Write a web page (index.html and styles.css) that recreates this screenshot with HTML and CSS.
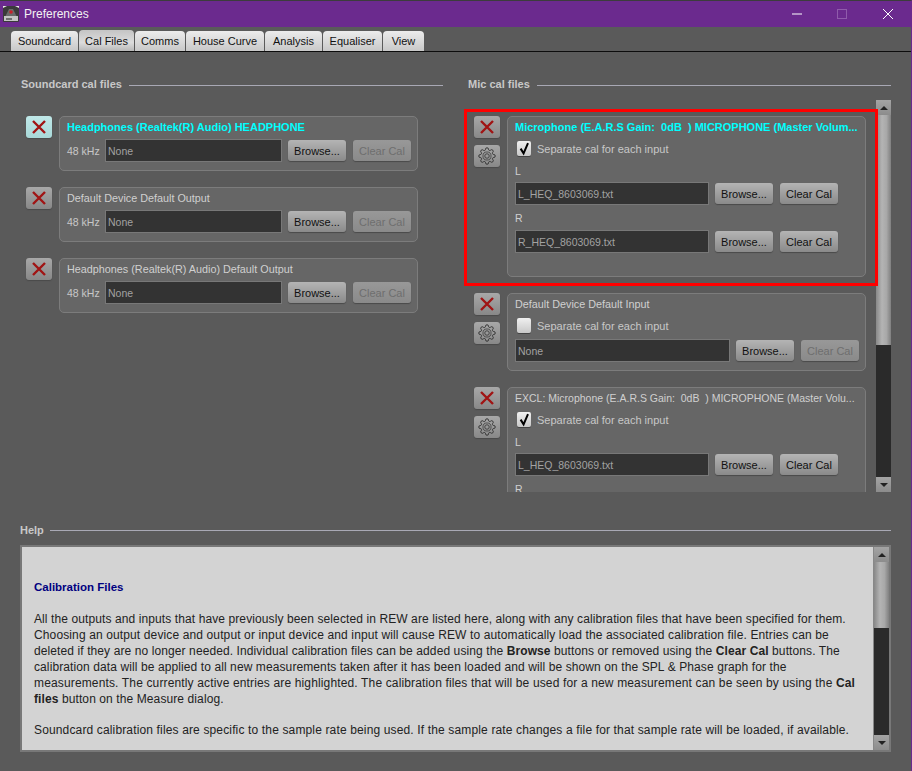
FILE: index.html
```html
<!DOCTYPE html>
<html lang="en">
<head>
<meta charset="utf-8">
<title>Preferences</title>
<link rel="stylesheet" href="styles.css">
</head>
<body>
<svg class="defs" width="0" height="0" aria-hidden="true">
  <symbol id="x" viewBox="0 0 16 16"><path d="M2 2L14 14M14 2L2 14" fill="none" stroke="#a01414" stroke-width="2.4"/></symbol>
  <symbol id="gear" viewBox="0 0 24 24">
    <path fill="none" stroke="#2e2e2e" stroke-width="1.2" d="M19.4 15a1.65 1.65 0 0 0 .33 1.82l.06.06a2 2 0 0 1 0 2.83 2 2 0 0 1-2.83 0l-.06-.06a1.65 1.65 0 0 0-1.82-.33 1.65 1.65 0 0 0-1 1.51V21a2 2 0 0 1-2 2 2 2 0 0 1-2-2v-.09A1.65 1.65 0 0 0 9 19.4a1.65 1.65 0 0 0-1.82.33l-.06.06a2 2 0 0 1-2.83 0 2 2 0 0 1 0-2.83l.06-.06a1.65 1.65 0 0 0 .33-1.82 1.65 1.65 0 0 0-1.51-1H3a2 2 0 0 1-2-2 2 2 0 0 1 2-2h.09A1.65 1.65 0 0 0 4.6 9a1.65 1.65 0 0 0-.33-1.82l-.06-.06a2 2 0 0 1 0-2.83 2 2 0 0 1 2.83 0l.06.06a1.65 1.65 0 0 0 1.82.33H9a1.65 1.65 0 0 0 1-1.51V3a2 2 0 0 1 2-2 2 2 0 0 1 2 2v.09a1.65 1.65 0 0 0 1 1.51 1.65 1.65 0 0 0 1.82-.33l.06-.06a2 2 0 0 1 2.83 0 2 2 0 0 1 0 2.83l-.06.06a1.65 1.65 0 0 0-.33 1.82V9a1.65 1.65 0 0 0 1.51 1H21a2 2 0 0 1 2 2 2 2 0 0 1-2 2h-.09a1.65 1.65 0 0 0-1.51 1z"/>
    <circle cx="12" cy="12" r="5.4" fill="none" stroke="#3a3a3a" stroke-width="1"/>
    <circle cx="12" cy="12" r="3" fill="none" stroke="#3a3a3a" stroke-width="1.2"/>
  </symbol>
  <symbol id="check" viewBox="0 0 15 15"><path d="M3.6 7.6L6.6 12.4L11 2.2" fill="none" stroke="#000" stroke-width="2"/></symbol>
</svg>
<div class="window">
  <header class="titlebar">
    <svg class="appicon" viewBox="0 0 16 16" width="16" height="16">
      <rect width="16" height="16" rx="1" fill="#3a3a3a"/>
      <path d="M0 2L4 0L0 0ZM16 2L12 0L16 0Z" fill="#e8e8e8"/>
      <path d="M2 11L6 3L10 3L14 11Z" fill="#6a6a6a"/>
      <rect x="1" y="10" width="14" height="5" fill="#c4c4c4"/>
      <rect x="3" y="12" width="6" height="2" fill="#707070"/>
      <circle cx="8" cy="6" r="1.8" fill="#c8202a"/>
    </svg>
    <span class="title">Preferences</span>
    <div class="winctl">
      <svg class="ctl ctl-min" viewBox="0 0 10 10" width="10" height="10"><path d="M0 5H10" stroke="#fff" stroke-width="1"/></svg>
      <svg class="ctl ctl-max" viewBox="0 0 10 10" width="10" height="10"><rect x=".5" y=".5" width="9" height="9" fill="none" stroke="#8f5bab"/></svg>
      <svg class="ctl ctl-close" viewBox="0 0 10 10" width="10" height="10"><path d="M0 0L10 10M10 0L0 10" stroke="#fff" stroke-width="1"/></svg>
    </div>
  </header>

  <nav class="tabs">
    <span class="tab tab-1">Soundcard</span>
    <span class="tab tab-2 tab-active">Cal Files</span>
    <span class="tab tab-3">Comms</span>
    <span class="tab tab-4">House Curve</span>
    <span class="tab tab-5">Analysis</span>
    <span class="tab tab-6">Equaliser</span>
    <span class="tab tab-7">View</span>
  </nav>

  <main class="columns">
    <section class="col">
      <h2 class="sect"><span>Soundcard cal files</span></h2>
      <div class="cardlist">
        <div class="item">
          <div class="side"><button class="ibtn ibtn-active"><svg width="16" height="16"><use href="#x"/></svg></button></div>
          <div class="card">
            <div class="ctitle active">Headphones (Realtek(R) Audio) HEADPHONE</div>
            <div class="frow sc">
              <span class="rate">48 kHz</span>
              <div class="field w-sc">None</div>
              <button class="btn">Browse...</button>
              <button class="btn off">Clear Cal</button>
            </div>
          </div>
        </div>
        <div class="item">
          <div class="side"><button class="ibtn"><svg width="16" height="16"><use href="#x"/></svg></button></div>
          <div class="card">
            <div class="ctitle">Default Device Default Output</div>
            <div class="frow sc">
              <span class="rate">48 kHz</span>
              <div class="field w-sc">None</div>
              <button class="btn">Browse...</button>
              <button class="btn off">Clear Cal</button>
            </div>
          </div>
        </div>
        <div class="item">
          <div class="side"><button class="ibtn"><svg width="16" height="16"><use href="#x"/></svg></button></div>
          <div class="card">
            <div class="ctitle">Headphones (Realtek(R) Audio) Default Output</div>
            <div class="frow sc">
              <span class="rate">48 kHz</span>
              <div class="field w-sc">None</div>
              <button class="btn">Browse...</button>
              <button class="btn off">Clear Cal</button>
            </div>
          </div>
        </div>
      </div>
    </section>

    <section class="col">
      <h2 class="sect"><span>Mic cal files</span></h2>
      <div class="scroller">
        <div class="viewport">
          <div class="cardlist miclist">
            <div class="item">
              <div class="side">
                <button class="ibtn"><svg width="16" height="16"><use href="#x"/></svg></button>
                <button class="ibtn"><svg width="18" height="18"><use href="#gear"/></svg></button>
              </div>
              <div class="card card-tall">
                <div class="ctitle active">Microphone (E.A.R.S Gain:&nbsp; 0dB&nbsp; ) MICROPHONE (Master Volum...</div>
                <label class="chk"><span class="box"><svg width="15" height="15"><use href="#check"/></svg></span>Separate cal for each input</label>
                <div class="chan">L</div>
                <div class="frow">
                  <div class="field w-lr">L_HEQ_8603069.txt</div>
                  <button class="btn">Browse...</button>
                  <button class="btn on">Clear Cal</button>
                </div>
                <div class="chan chan-r">R</div>
                <div class="frow">
                  <div class="field w-lr">R_HEQ_8603069.txt</div>
                  <button class="btn">Browse...</button>
                  <button class="btn on">Clear Cal</button>
                </div>
              </div>
            </div>
            <div class="item">
              <div class="side">
                <button class="ibtn"><svg width="16" height="16"><use href="#x"/></svg></button>
                <button class="ibtn"><svg width="18" height="18"><use href="#gear"/></svg></button>
              </div>
              <div class="card">
                <div class="ctitle">Default Device Default Input</div>
                <label class="chk"><span class="box"></span>Separate cal for each input</label>
                <div class="frow single">
                  <div class="field w-one">None</div>
                  <button class="btn">Browse...</button>
                  <button class="btn off">Clear Cal</button>
                </div>
              </div>
            </div>
            <div class="item">
              <div class="side">
                <button class="ibtn"><svg width="16" height="16"><use href="#x"/></svg></button>
                <button class="ibtn"><svg width="18" height="18"><use href="#gear"/></svg></button>
              </div>
              <div class="card card-tall">
                <div class="ctitle excl">EXCL: Microphone (E.A.R.S Gain:&nbsp; 0dB&nbsp; ) MICROPHONE (Master Volu...</div>
                <label class="chk"><span class="box"><svg width="15" height="15"><use href="#check"/></svg></span>Separate cal for each input</label>
                <div class="chan">L</div>
                <div class="frow">
                  <div class="field w-lr">L_HEQ_8603069.txt</div>
                  <button class="btn">Browse...</button>
                  <button class="btn on">Clear Cal</button>
                </div>
                <div class="chan chan-r">R</div>
              </div>
            </div>
          </div>
        </div>
        <div class="sbar">
          <div class="sarrow"><i class="up"></i></div>
          <div class="sthumb thumb-mic"></div>
          <div class="strack"></div>
          <div class="sarrow"><i class="down"></i></div>
        </div>
        <div class="highlight"></div>
      </div>
    </section>
  </main>

  <section class="help">
    <h2 class="sect"><span>Help</span></h2>
    <div class="helpbox">
      <div class="helptext">
        <h3>Calibration Files</h3>
        <p>All the outputs and inputs that have previously been selected in REW are listed here, along with any calibration files that have been specified for them.<br>
        <span class="l-mid">Choosing an output device and output or input device and input will cause REW to automatically load the associated calibration file. Entries can be</span><br>
        deleted if they are no longer needed. Individual calibration files can be added using the <b>Browse</b> buttons or removed using the <b>Clear Cal</b> buttons. The<br>
        calibration data will be applied to all new measurements taken after it has been loaded and will be shown on the SPL &amp; Phase graph for the<br>
        <span class="l-wide">measurements. The currently active entries are highlighted. The calibration files that will be used for a new measurement can be seen by using the <b>Cal</b></span><br>
        <b>files</b> button on the Measure dialog.</p>
        <p class="l-wide">Soundcard calibration files are specific to the sample rate being used. If the sample rate changes a file for that sample rate will be loaded, if available.</p>
      </div>
      <div class="sbar">
        <div class="sarrow"><i class="up"></i></div>
        <div class="sthumb thumb-help"></div>
        <div class="strack"></div>
        <div class="sarrow"><i class="down"></i></div>
      </div>
    </div>
  </section>
</div>
</body>
</html>
```
FILE: styles.css
```css
* { box-sizing: border-box; }
html, body { margin: 0; padding: 0; }
body { font-family: "Liberation Sans", Arial, sans-serif; font-size: 11px; background: #5a5a5a; }
.defs { position: absolute; }
.window { width: 912px; height: 771px; display: flex; flex-direction: column; background: #5a5a5a; border-top: 1px solid #3c3c3c; border-right: 1px solid #6b2a8e; overflow: hidden; }

.titlebar { height: 26px; flex: none; background: #6b2a8e; display: flex; align-items: center; padding-left: 3px; }
.appicon { flex: none; margin-top: -1px; }
.title { margin-left: 5px; color: #f2f2f2; font-size: 12px; margin-top: -1px; }
.winctl { margin-left: auto; display: flex; align-items: center; height: 100%; }
.ctl { flex: none; margin-top: -1px; }
.ctl-min { margin-right: 35px; }
.ctl-max { margin-right: 36px; }
.ctl-close { margin-right: 18px; }

.tabs { height: 25px; flex: none; display: flex; align-items: flex-end; padding-left: 11px; gap: 1px; border-bottom: 1px solid #0c0c0c; }
.tab { height: 20px; display: flex; align-items: center; justify-content: center; font-size: 11px; color: #111; background: linear-gradient(#ececec, #c8c8c8); border-radius: 4px 4px 0 0; }
.tab-active { height: 21px; background: linear-gradient(#c4c4c4, #dcdcdc 60%, #b8b8b8); }
.tab-1 { width: 67px; }
.tab-2 { width: 55px; }
.tab-3 { width: 50px; }
.tab-4 { width: 78px; }
.tab-5 { width: 57px; }
.tab-6 { width: 59px; }
.tab-7 { width: 41px; }

.columns { flex: none; display: grid; grid-template-columns: 422px 423px; column-gap: 25px; padding: 25px 0 0 21px; height: 439px; }
.col { min-width: 0; display: flex; flex-direction: column; }
.sect { margin: 0; height: 14px; display: flex; align-items: center; gap: 7px; font-size: 11px; font-weight: bold; color: #c8c8c8; }
.sect::after { content: ""; flex: 1; height: 1px; background: #a8a8b4; margin-top: 3px; }

.cardlist { display: flex; flex-direction: column; gap: 16px; margin-top: 25px; }
.miclist { margin-top: 16px; }
.item { display: flex; gap: 7px; padding-left: 5px; }
.miclist .item { padding-left: 6px; }
.side { width: 26px; flex: none; display: flex; flex-direction: column; gap: 7px; }
.ibtn { width: 26px; height: 22px; padding: 0; border: 0; border-radius: 3px; display: flex; align-items: center; justify-content: center; background: linear-gradient(#a8a8a8, #888); box-shadow: 0 1px 1px #4a4a4a; }
.ibtn-active { background: linear-gradient(#c0e8e8, #a8d8d8); }

.card { width: 359px; flex: none; background: #666; border: 1px solid #7c7c7c; border-radius: 5px; padding: 3px 7px 8px; }
.card-tall { padding-bottom: 23px; }
.ctitle { height: 14px; line-height: 14px; font-size: 10.8px; color: #d0d0d0; white-space: nowrap; overflow: hidden; }
.ctitle.active { color: #00ffff; font-weight: bold; font-size: 11px; }
.ctitle.excl { font-size: 10.5px; }
.frow { display: flex; align-items: center; height: 23px; }
.frow.sc { margin-top: 5px; }
.frow.single { margin-top: 6px; }
.frow .btn { margin-left: 6px; }
.frow .btn + .btn { margin-left: 7px; }
.rate { width: 38px; flex: none; color: #c8c8c8; font-size: 10.5px; }
.field { height: 23px; line-height: 23px; background: #333; border: 1px solid #787878; color: #a2a2a2; font-size: 10.5px; padding-left: 2px; flex: none; }
.w-sc { width: 177px; }
.w-lr { width: 194px; }
.w-one { width: 215px; }
.btn { width: 58px; height: 21px; padding: 0; flex: none; border: 0; border-radius: 3px; font-family: inherit; font-size: 11px; color: #111; background: linear-gradient(#b4b4b4, #8a8a8a); box-shadow: 0 1px 1px #4a4a4a; }
.btn.off { color: #6e6e6e; background: linear-gradient(#989898, #8a8a8a); }

.chk { display: flex; align-items: center; height: 15px; margin-top: 7px; padding-left: 2px; color: #c8c8c8; font-size: 11px; }
.box { width: 14px; height: 15px; flex: none; margin-right: 6px; border-radius: 2px; background: linear-gradient(#f0f0f0, #c8c8c8); box-shadow: 0 1px 0 #444; display: block; }
.box svg { display: block; }
.chan { height: 14px; line-height: 14px; margin: 8px 0 4px; color: #d0d0d0; font-size: 10.5px; }
.chan-r { margin: 6px 0 5px; }

.scroller { position: relative; margin-top: 9px; height: 392px; display: flex; }
.viewport { width: 408px; height: 392px; overflow: hidden; flex: none; }
.highlight { position: absolute; left: -4px; top: 9px; width: 414px; height: 177px; border: 3px solid #f00; pointer-events: none; }
.sbar { width: 15px; flex: none; display: flex; flex-direction: column; background: #777; }
.sarrow { height: 15px; flex: none; background: linear-gradient(#a4a4a4, #8c8c8c); display: flex; align-items: center; justify-content: center; }
.up, .down { display: block; width: 0; height: 0; border-left: 4px solid transparent; border-right: 4px solid transparent; }
.up { border-bottom: 4px solid #222; }
.down { border-top: 4px solid #222; }
.sthumb { flex: none; background: linear-gradient(90deg, #888, #b4b4b4 40%, #a8a8a8 70%, #808080); }
.thumb-mic { height: 230px; }
.thumb-help { height: 66px; }
.strack { flex: 1; background: #2a2a2a; }

.help { flex: none; padding: 32px 20px 0; }
.help .sect { gap: 6px; }
.help .sect::after { margin-top: 1px; }
.helpbox { margin-top: 8px; height: 207px; border: 2px solid #787878; background: #d3d3d3; display: flex; }
.helptext { flex: 1; min-width: 0; padding: 32px 0 0 12px; color: #222; font-size: 12px; letter-spacing: 0.1px; line-height: 16px; white-space: nowrap; overflow: hidden; }
.helptext h3 { margin: 0 0 16px; font-size: 11.5px; letter-spacing: 0; color: #000080; }
.helptext p { margin: 0 0 15px; }
.helptext .l-mid { letter-spacing: 0.125px; }
.helptext .l-wide { letter-spacing: 0.145px; }
.helpbox .sbar { height: 203px; background: #777; border-left: 1px solid #888; width: 16px; }
```
